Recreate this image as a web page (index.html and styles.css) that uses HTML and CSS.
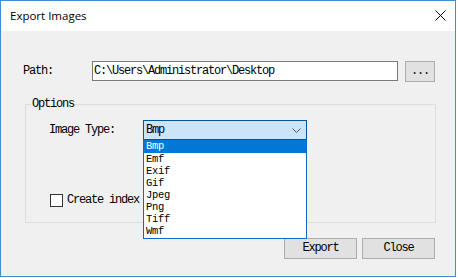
FILE: index.html
```html
<!DOCTYPE html>
<html>
<head>
<meta charset="utf-8">
<link rel="stylesheet" href="styles.css">
</head>
<body>
<div class="window">
  <div class="titlebar">
    <span class="title">Export Images</span>
    <svg class="close" width="11" height="11" viewBox="0 0 11 11"><path d="M0.5 0.5L10.5 10.5M10.5 0.5L0.5 10.5" stroke="#000" stroke-width="1"/></svg>
  </div>
  <div class="content">
    <div class="path-row">
      <span class="label path-label">Path:</span>
      <div class="textbox">C:\Users\Administrator\Desktop</div>
      <div class="btn browse">...</div>
    </div>
    <fieldset class="group">
      <legend class="legend">Options</legend>
      <div class="group-body">
        <div class="type-row">
          <span class="label type-label">Image Type:</span>
          <div class="combo">
            <div class="combo-box">
              <span class="combo-text">Bmp</span>
              <svg class="chevron" width="9" height="5" viewBox="0 0 9 5"><path d="M0.5 0.5L4.5 4.5L8.5 0.5" fill="none" stroke="#555" stroke-width="1"/></svg>
            </div>
            <ul class="list">
              <li class="item selected">Bmp</li>
              <li class="item">Emf</li>
              <li class="item">Exif</li>
              <li class="item">Gif</li>
              <li class="item">Jpeg</li>
              <li class="item">Png</li>
              <li class="item">Tiff</li>
              <li class="item">Wmf</li>
            </ul>
          </div>
        </div>
        <div class="check-row">
          <span class="checkbox"></span>
          <span class="label check-label">Create index</span>
        </div>
      </div>
    </fieldset>
    <div class="buttons">
      <div class="btn action">Export</div>
      <div class="btn action">Close</div>
    </div>
  </div>
</div>
</body>
</html>
```
FILE: styles.css
```css
* { box-sizing: border-box; }
html, body { margin: 0; padding: 0; background: #ffffff; }
body { width: 458px; height: 278px; overflow: hidden; }

.window {
  width: 456px;
  height: 277px;
  border: 1px solid #3d8ed6;
  display: flex;
  flex-direction: column;
  background: #f0f0f0;
}

.titlebar {
  height: 30px;
  background: #ffffff;
  display: flex;
  align-items: flex-start;
  justify-content: space-between;
  padding-left: 9px;
}
.title {
  font-family: "Open Sans", "Liberation Sans", sans-serif;
  font-size: 11.5px;
  line-height: 30px;
  color: #000;
}
.close { margin-top: 9px; margin-right: 9px; }

.content {
  flex: 1;
  padding: 30px 20px 0 22px;
  font-family: "Liberation Mono", "DejaVu Sans Mono", monospace;
  font-size: 12px;
  letter-spacing: -1.2px;
  color: #000;
}

.label { line-height: 20px; white-space: nowrap; }

.path-row { display: flex; align-items: flex-start; }
.path-label { width: 69px; }
.textbox {
  width: 306px;
  height: 20px;
  border: 1px solid #7a7a7a;
  background: #fff;
  padding-left: 1px;
  line-height: 18px;
}
.btn {
  background: #e1e1e1;
  border: 1px solid #adadad;
  text-align: center;
  line-height: 19px;
}
.browse { width: 30px; height: 21px; margin-left: 7px; }

.group {
  margin: 16px 0 0 2px;
  padding: 10px 0 15px 5px;
  border: 1px solid #dcdcdc;
  min-width: 0;
  width: 411px;
}
.legend {
  padding: 0 1px;
  margin: 0;
  line-height: 12px;
}
.group-body { padding-left: 18px; }

.type-row { display: flex; align-items: flex-start; height: 20px; }
.type-label { width: 94px; }
.combo { position: relative; width: 164px; height: 20px; }
.combo-box {
  height: 20px;
  border: 1px solid #005499;
  background: #cce4f7;
  display: flex;
  align-items: center;
  justify-content: space-between;
  padding: 0 5px 0 2px;
  line-height: 18px;
}
.chevron { margin-top: 1px; }
.list {
  position: absolute;
  top: 20px;
  left: 0;
  width: 164px;
  margin: 0;
  padding: 0 0 1px 0;
  list-style: none;
  background: #fff;
  border: 1px solid #0a6cc8;
  border-top: none;
  z-index: 2;
  font-size: 10.5px;
  letter-spacing: -0.3px;
}
.item { height: 12px; line-height: 12px; padding-left: 2px; }
.selected { background: #0078d7; color: #fff; height: 13px; line-height: 13px; }

.check-row { display: flex; align-items: center; margin-top: 54px; height: 13px; }
.checkbox {
  width: 13px;
  height: 13px;
  margin-left: 1px;
  border: 1px solid #333;
  background: #fff;
}
.check-label { margin-left: 4px; line-height: 13px; }

.buttons {
  display: flex;
  justify-content: flex-end;
  gap: 5px;
  margin-top: 15px;
}
.action { width: 73px; height: 21px; }
```
